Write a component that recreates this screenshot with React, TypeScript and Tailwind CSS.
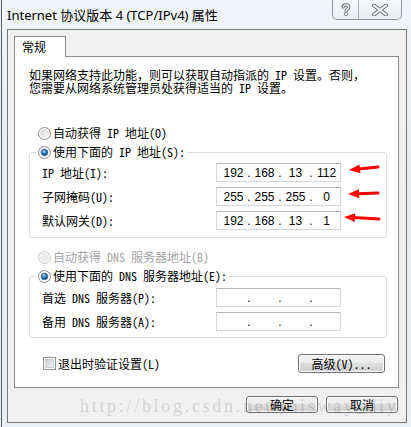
import React from 'react';

const cjk = "font-['Noto_Sans_Mono_CJK_SC','Noto_Sans_CJK_SC',sans-serif]";

type Pt = [number, number];

// Win7 style radio button
const Radio = ({ checked = false, disabled = false }: { checked?: boolean; disabled?: boolean }) => (
  <svg width="13" height="13" viewBox="0 0 13 13" className="shrink-0">
    <defs>
      <linearGradient id="rad-off" x1="0" y1="0" x2="1" y2="1">
        <stop offset="0" stopColor="#cfd2d6" />
        <stop offset="1" stopColor="#fbfbfb" />
      </linearGradient>
      <radialGradient id="rad-on" cx="0.4" cy="0.35" r="0.7">
        <stop offset="0" stopColor="#b7e2fb" />
        <stop offset="0.45" stopColor="#2f7ec0" />
        <stop offset="1" stopColor="#0f3c6c" />
      </radialGradient>
    </defs>
    <circle cx="6.5" cy="6.5" r="6" fill={disabled ? '#f4f4f4' : '#f7f7f7'} stroke={disabled ? '#c9c9c9' : '#8e8f8f'} />
    <circle cx="6.5" cy="6.5" r="4.2" fill={disabled ? '#ececec' : 'url(#rad-off)'} />
    {checked && <circle cx="6.5" cy="6.5" r="3.2" fill="url(#rad-on)" stroke="#1d4f80" strokeWidth="0.6" />}
  </svg>
);

const Checkbox = () => (
  <svg width="13" height="13" viewBox="0 0 13 13" className="shrink-0">
    <defs>
      <linearGradient id="chk-in" x1="0" y1="0" x2="1" y2="1">
        <stop offset="0" stopColor="#c9ccd1" />
        <stop offset="1" stopColor="#f4f4f4" />
      </linearGradient>
    </defs>
    <rect x="0.5" y="0.5" width="12" height="12" fill="#fff" stroke="#8e8f8f" />
    <rect x="2.5" y="2.5" width="8" height="8" fill="url(#chk-in)" stroke="#c3c6cb" strokeWidth="0.8" />
  </svg>
);

// red hand-drawn annotation arrow, coords relative to the slot next to the input
const Arrow = ({ tip, tail }: { tip: Pt; tail: Pt }) => {
  const dx = tail[0] - tip[0];
  const dy = tail[1] - tip[1];
  const len = Math.hypot(dx, dy);
  const ux = dx / len;
  const uy = dy / len;
  const bx = tip[0] + ux * 11;
  const by = tip[1] + uy * 11;
  const px = -uy * 4.5;
  const py = ux * 4.5;
  return (
    <svg width="40" height="19" className="overflow-visible">
      <line x1={bx - ux} y1={by - uy} x2={tail[0]} y2={tail[1]} stroke="#f00" strokeWidth="3" strokeLinecap="round" />
      <polygon points={`${tip[0]},${tip[1]} ${bx + px},${by + py} ${bx - px},${by - py}`} fill="#f00" />
    </svg>
  );
};

const IpBox = ({ parts }: { parts?: string[] }) => (
  <div className="flex h-[19px] w-[125px] items-center border border-[#d2d5da] border-t-[#b3b6bc] bg-white pl-[3px] font-['Liberation_Sans',sans-serif] text-[12px] text-black">
    {[0, 1, 2, 3].map(i => (
      <React.Fragment key={i}>
        {i > 0 && <span className="w-[4px] text-center leading-none">.</span>}
        <span className="w-[27px] text-center leading-none">{parts ? parts[i] : ''}</span>
      </React.Fragment>
    ))}
  </div>
);

const Row = ({ label, parts, arrow }: { label: string; parts?: string[]; arrow?: { tip: Pt; tail: Pt } }) => (
  <div className="flex h-[19px] items-center pl-[6px]">
    <span className="flex-1">{label}</span>
    <IpBox parts={parts} />
    <div className="h-[19px] w-[40px]">{arrow && <Arrow tip={arrow.tip} tail={arrow.tail} />}</div>
  </div>
);

const Button = ({ children, className }: { children: React.ReactNode; className: string }) => (
  <div className={`flex items-center justify-center rounded-[3px] border border-[#707070] bg-[linear-gradient(to_bottom,#f2f2f2_0%,#ebebeb_50%,#dddddd_50%,#cfcfcf_100%)] shadow-[inset_0_0_0_1px_#fcfcfc] ${className}`}>
    {children}
  </div>
);

export default function App() {
  return (
    <div className="relative flex h-[427px] w-[411px] overflow-hidden bg-[#e9eef4]">
      <div className="ml-[1px] flex w-[410px] flex-col border-l border-[#5d5d5d] bg-[linear-gradient(to_bottom,#f2f5f9,#e5ecf3_40%,#e9eff5)]">
        {/* Title bar */}
        <div className="flex h-[29px] shrink-0 items-start">
          <span className="pl-[5px] pt-[7px] font-['Noto_Sans','Noto_Sans_CJK_SC',sans-serif] text-[13px] leading-[16px] text-black">
            Internet 协议版本 4 (TCP/IPv4) 属性
          </span>
          <div className="ml-auto mr-[9px] flex h-[20px] overflow-hidden rounded-b-[5px] border border-t-0 border-[#8d96a2] bg-[linear-gradient(to_bottom,#f6f8fa,#e9edf2)]">
            <div className="flex w-[26px] items-center justify-center border-r border-[#a6afba]">
              <svg width="10" height="13" viewBox="0 0 10 13">
                <path d="M2.2 4 C2.2 1.2 7.8 1.2 7.8 4 C7.8 6 5 6 5 8.3" fill="none" stroke="#6f7378" strokeWidth="3.2" strokeLinecap="round" />
                <path d="M2.2 4 C2.2 1.2 7.8 1.2 7.8 4 C7.8 6 5 6 5 8.3" fill="none" stroke="#fff" strokeWidth="1.3" strokeLinecap="round" />
                <circle cx="5" cy="11.2" r="1.6" fill="#fff" stroke="#6f7378" strokeWidth="0.9" />
              </svg>
            </div>
            <div className="flex w-[42px] items-center justify-center">
              <svg width="16" height="12" viewBox="0 0 16 12">
                <path d="M2 1.5 L14 10.5 M14 1.5 L2 10.5" stroke="#6f7378" strokeWidth="4" strokeLinecap="round" />
                <path d="M2 1.5 L14 10.5 M14 1.5 L2 10.5" stroke="#fff" strokeWidth="2" strokeLinecap="round" />
              </svg>
            </div>
          </div>
        </div>

        {/* Client area */}
        <div className={`ml-[5px] flex h-[394px] w-[400px] shrink-0 flex-col border border-[#777] bg-[#f0f0f0] pl-[6px] pt-[6px] text-[12px] text-black ${cjk}`}>
          <div className="relative z-10 -mb-[1px] flex h-[21px] w-[52px] items-center border border-b-0 border-[#898c95] bg-white pb-[1px] pl-[7px] leading-none">
            常规
          </div>
          <div className="flex h-[332px] w-[385px] flex-col border border-[#898c95] bg-white pl-[14px]">
            <p className="mt-[11px] leading-[13px]">
              如果网络支持此功能，则可以获取自动指派的 IP 设置。否则，
              <br />
              您需要从网络系统管理员处获得适当的 IP 设置。
            </p>

            <div className="ml-[9px] mt-[32px] flex h-[14px] items-center gap-[2px] leading-none">
              <Radio />
              <span>自动获得 IP 地址(O)</span>
            </div>

            <fieldset className="mt-[5px] w-[358px] rounded-[3px] border border-[#d5dfe5] pb-[7px] pl-[6px] pr-[5px] pt-[4px]">
              <legend className="px-[2px]">
                <span className="flex h-[14px] items-center gap-[2px] leading-none">
                  <Radio checked />
                  <span>使用下面的 IP 地址(S):</span>
                </span>
              </legend>
              <div className="flex flex-col gap-[5px]">
                <Row label="IP 地址(I):" parts={['192', '168', '13', '112']} arrow={{ tip: [8, 7], tail: [37, 4] }} />
                <Row label="子网掩码(U):" parts={['255', '255', '255', '0']} arrow={{ tip: [7, 7], tail: [37, 6] }} />
                <Row label="默认网关(D):" parts={['192', '168', '13', '1']} arrow={{ tip: [3, 6], tail: [38, 8] }} />
              </div>
            </fieldset>

            <div className="ml-[9px] mt-[12px] flex h-[14px] items-center gap-[2px] leading-none text-[#a3a3a3]">
              <Radio disabled />
              <span>自动获得 DNS 服务器地址(B)</span>
            </div>

            <fieldset className="mt-[5px] w-[358px] rounded-[3px] border border-[#d5dfe5] pb-[6px] pl-[6px] pr-[5px] pt-[5px]">
              <legend className="px-[2px]">
                <span className="flex h-[14px] items-center gap-[2px] leading-none">
                  <Radio checked />
                  <span>使用下面的 DNS 服务器地址(E):</span>
                </span>
              </legend>
              <div className="flex flex-col gap-[5px]">
                <Row label="首选 DNS 服务器(P):" />
                <Row label="备用 DNS 服务器(A):" />
              </div>
            </fieldset>

            <div className="mt-[16px] flex h-[19px] w-[356px] items-center leading-none">
              <div className="ml-[14px] flex items-center gap-[2px]">
                <Checkbox />
                <span>退出时验证设置(L)</span>
              </div>
              <Button className="ml-auto h-[19px] w-[87px]">高级(V)...</Button>
            </div>
          </div>

          <div className="mt-[8px] flex justify-end gap-[8px] pr-[8px] leading-none">
            <Button className="h-[17px] w-[72px]">确定</Button>
            <Button className="h-[17px] w-[72px]">取消</Button>
          </div>
        </div>
      </div>

      {/* blog watermark over the dialog */}
      <span className="pointer-events-none absolute left-[80px] top-[397px] font-['Liberation_Serif',serif] text-[18px] leading-[18px] tracking-[2.7px] text-[rgba(0,0,0,0.14)]">
        http://blog.csdn.net/thisway_diy
      </span>
    </div>
  );
}
